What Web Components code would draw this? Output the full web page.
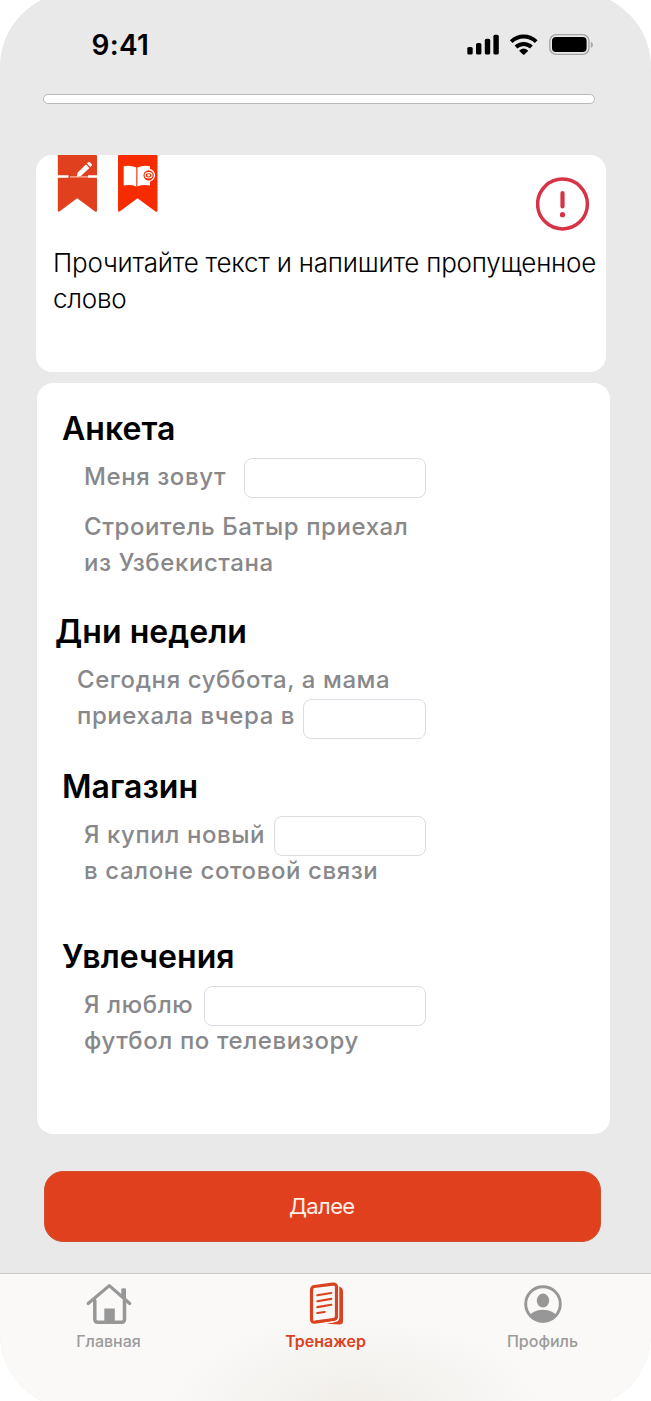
<!DOCTYPE html>
<html lang="ru">
  <head>
    <meta charset="utf-8" />
    <title>Тренажер</title>
    <style>
      body {
        margin: 0;
        background: #fff;
        overflow: hidden;
        font-family: Inter, "Noto Sans", sans-serif;
      }
    </style>
  </head>
  <body>
    <script type="text/javascript">
      class BaseElement extends HTMLElement {
        constructor() {
          super();
          this.attachShadow({ mode: "open" });
        }
        connectedCallback() {
          const template = document.createElement("template");
          template.innerHTML = this.html();
          this.shadowRoot.replaceChildren(template.content.cloneNode(true));
        }
      }

      class PhoneScreen extends BaseElement {
        html() {
          return `
          <style>
            :host {
              display: flex;
              flex-direction: column;
              box-sizing: border-box;
              width: 651px;
              height: 1417px;
              margin-top: -8px;
              padding-top: 8px;
              border-radius: 75px;
              overflow: hidden;
              background: #e9e9e9;
            }
          </style>
          <slot></slot>
          `;
        }
      }

      class StatusBar extends BaseElement {
        html() {
          return `
          <style>
            :host {
              display: flex;
              justify-content: space-between;
              align-items: center;
              height: 90px;
              box-sizing: border-box;
              padding: 0 57px 0 91.5px;
              flex: none;
            }
            .time {
              font-size: 28px;
              font-weight: 600;
              letter-spacing: 0.3px;
            }
          </style>
          <span class="time">9:41</span>
          <svg width="128" height="24" viewBox="466 33 128 24">
            <rect x="467.3" y="47" width="5.4" height="7.6" rx="1.6" />
            <rect x="476" y="43" width="5.4" height="11.6" rx="1.6" />
            <rect x="484.8" y="38.7" width="5.4" height="15.9" rx="1.6" />
            <rect x="493.4" y="34.7" width="5.4" height="19.9" rx="1.6" />
            <g fill="none" stroke="#000" stroke-width="3.9">
              <path d="M511.2 41.6a18 18 0 0 1 25 0" />
              <path d="M516 47a11.2 11.2 0 0 1 15.4 0" />
            </g>
            <path d="M519.6 50.2a6.4 6.4 0 0 1 8.2 0q.5.5 0 1l-3.4 3.2q-.7.6-1.4 0l-3.4-3.2q-.5-.5 0-1z" />
            <rect x="549.8" y="34.6" width="39.2" height="19.8" rx="6.4" fill="none" stroke="#a5a5a5" stroke-width="1.4" />
            <rect x="552" y="37" width="34.6" height="15" rx="4" />
            <path d="M590.8 41.7q2.2.9 2.2 3t-2.2 3.2z" fill="#a5a5a5" />
          </svg>
          `;
        }
      }

      class ProgressTrack extends BaseElement {
        html() {
          return `
          <style>
            :host {
              display: block;
              flex: none;
              box-sizing: border-box;
              height: 10px;
              margin: 4px 56px 0 43px;
              border: 1px solid #b9b9b9;
              border-radius: 5px;
              background: #fff;
            }
          </style>
          `;
        }
      }

      class TaskCard extends BaseElement {
        html() {
          return `
          <style>
            :host {
              display: block;
              flex: none;
              box-sizing: border-box;
              width: 570px;
              height: 217px;
              margin: 51px 0 0 36px;
              padding: 0 0 0 17px;
              border-radius: 16px;
              background: #fff;
            }
            .top {
              display: flex;
              justify-content: space-between;
              align-items: flex-start;
              height: 90px;
              padding-right: 16px;
            }
            .alert {
              margin-top: 22px;
            }
            p {
              margin: 0;
              font-size: 26px;
              line-height: 36px;
              letter-spacing: -0.23px;
              font-weight: 300;
              white-space: nowrap;
            }
          </style>
          <div class="top">
            <svg width="106" height="60" viewBox="53 155 106 60">
              <path fill="#e0401d" d="M58 155h38q1 0 1 1v54.500q0 2-2 1L77.200 198.300 59.800 211.200q-2 1.300-2-1V155z" />
              <path stroke="#fff" stroke-width="2.600" d="M57 176.500h11.500M88 176.500h9" />
              <path stroke="#f6b8a8" stroke-width="1.200" d="M70 176.800h18" />
              <path fill="#fff" d="M76.700 176.800l1-4.400 8.200-8 3.600 3.500-8.600 8.200z" />
              <path fill="#fff" d="M86.800 163.500l1.300-1.200q1-.8 2 .1l1.500 1.500q.9.900 0 1.900l-1.300 1.300z" />
              <path fill="#f62b00" d="M119 155h37.500q1 0 1 1v54.500q0 2-2 1L137.500 198.300 120 211.200q-2 1.300-2-1V156q0-1 1-1z" />
              <path fill="#fff" d="M123.700 166.300q6.800-1.300 12.600 1.300v18.800q-5.600-2.300-12.600-1z" />
              <path fill="#fff" d="M150 166.300q-6.800-1.300-12.600 1.300v18.800q5.600-2.300 12.600-1z" />
              <circle cx="148.600" cy="175.300" r="5.800" fill="#f62b00" stroke="#fff" stroke-width="1.300" />
              <ellipse cx="148.600" cy="175.300" rx="3.400" ry="2.700" fill="none" stroke="#fff" stroke-width="1.200" />
              <circle cx="148.600" cy="175.300" r="1.200" fill="#fff" />
            </svg>
            <svg class="alert" width="54" height="54" viewBox="0 0 54 54">
              <circle cx="26.500" cy="27" r="24.900" fill="none" stroke="#d63346" stroke-width="3.500" />
              <path stroke="#d63346" stroke-width="4.200" stroke-linecap="round" d="M26.500 16v13.500" />
              <circle cx="26.500" cy="37.700" r="2.600" fill="#d63346" />
            </svg>
          </div>
          <p><slot></slot></p>
          `;
        }
      }

      class QuizCard extends BaseElement {
        html() {
          return `
          <style>
            :host {
              display: block;
              flex: none;
              box-sizing: border-box;
              width: 573px;
              height: 751px;
              margin: 11px 0 0 37px;
              padding-top: 26px;
              border-radius: 16px;
              background: #fff;
            }
          </style>
          <slot></slot>
          `;
        }
      }

      class QuizSection extends BaseElement {
        html() {
          return `
          <style>
            :host {
              display: block;
              padding-left: 25px;
            }
            h2 {
              margin: 0 0 10px;
              font-size: 32px;
              line-height: 40px;
              font-weight: 600;
              letter-spacing: 0.05px;
            }
            .lines {
              padding-left: 22px;
            }
          </style>
          <h2>${this.getAttribute("heading")}</h2>
          <div class="lines"><slot></slot></div>
          `;
        }
      }

      class QuizLine extends BaseElement {
        html() {
          return `
          <style>
            :host {
              display: flex;
              align-items: flex-start;
              height: 36px;
              width: 342px;
              line-height: 36px;
              font-size: 24px;
              font-weight: 500;
              letter-spacing: 0.58px;
              color: #88888b;
              white-space: nowrap;
            }
          </style>
          <slot></slot>
          `;
        }
      }

      class WordField extends BaseElement {
        html() {
          return `
          <style>
            :host {
              flex: none;
              margin-left: auto;
            }
            input {
              display: block;
              box-sizing: border-box;
              width: ${this.getAttribute("width")}px;
              height: 40px;
              border: 1px solid #dcdce4;
              border-radius: 8px;
              background: #fff;
              outline: none;
            }
          </style>
          <input type="text" />
          `;
        }
      }

      class NextButton extends BaseElement {
        html() {
          return `
          <style>
            :host {
              display: block;
              flex: none;
              margin: 37px 0 0 43.5px;
            }
            button {
              display: block;
              width: 557.5px;
              height: 71px;
              padding: 0 1px 2px 0;
              border: 1px solid #d0512f;
              border-radius: 19px;
              background: #e0401d;
              color: #fff0ea;
              font: 400 22px Inter, "Noto Sans", sans-serif;
              letter-spacing: -0.6px;
            }
          </style>
          <button><slot></slot></button>
          `;
        }
      }

      class TabBar extends BaseElement {
        html() {
          return `
          <style>
            :host {
              display: flex;
              flex: 1;
              margin-top: 31px;
              border-top: 1px solid #cbc9cb;
              background: radial-gradient(ellipse 190px 95px at 355px 136px, #f0ede8, #faf9f8);
            }
          </style>
          <slot></slot>
          `;
        }
      }

      const icons = {
        home: `
          <g fill="none" stroke="#979797" stroke-linecap="round" stroke-linejoin="round">
            <path stroke-width="3.2" d="M3.200 21.500 24.300 3.600l20.400 17.900" />
            <path stroke-width="3.500" d="M9.800 18.500v18.700q0 3 3 3h23.700q3 0 3-3V18.500" />
            <path stroke-width="4.200" stroke-linecap="butt" d="M38.600 6.500v9" />
          </g>
          <path fill="#979797" d="M19.300 26.500h10.500V40H19.300zM36.500 7q2-1 4.500 0v11l-4.500-4z" />`,
        trainer: `
          <path fill="#d9431f" d="M36.500 4.300q4.500 1.500 4.500 4.700v30q0 3.500-3.500 3.500l-13-.8q9-1 12-4.200z" />
          <path fill="#faf9f8" stroke="#d9431f" stroke-width="3.200" stroke-linejoin="round" d="M12.300 4.500l18.500-2.300q3.700-.4 3.700 3v29q0 3-3.200 3.500l-18.500 2.500q-3.300.3-3.300-3V8q0-3 2.800-3.500z" />
          <path fill="none" stroke="#faf9f8" stroke-width="1.200" d="M36.700 4.500v31q0 3.200-3.500 4l-10 1.500" />
          <path stroke="#d9431f" stroke-width="2.100" stroke-linecap="round" d="M15.300 13.300l14-2.300M15.300 19.200l14-2.300M15.300 25.100l14-2.300M15.300 31l7.500-1" />`,
        profile: `
          <clipPath id="c"><circle cx="24" cy="22" r="18.500" /></clipPath>
          <circle cx="24" cy="22" r="17.300" fill="none" stroke="#979797" stroke-width="2.900" />
          <ellipse cx="24" cy="18.600" rx="6.200" ry="7" fill="#979797" />
          <path clip-path="url(#c)" fill="#979797" d="M9 35.300q4.500-7.600 15-7.600t15 7.600l-5 7H14z" />`,
      };

      class TabItem extends BaseElement {
        html() {
          return `
          <style>
            :host {
              display: flex;
              flex: 1;
              flex-direction: column;
              align-items: center;
              padding-top: 8px;
              font-size: 16px;
              font-weight: 500;
              letter-spacing: 0;
              line-height: 20px;
              color: #9b9b9b;
            }
            :host([active]) {
              color: #d9431f;
              font-weight: 600;
            }
            svg {
              margin-bottom: 5px;
            }
          </style>
          <svg width="48" height="44" viewBox="0 0 48 44">${icons[this.getAttribute("icon")]}</svg>
          <span><slot></slot></span>
          `;
        }
      }

      window.customElements.define("phone-screen", PhoneScreen);
      window.customElements.define("status-bar", StatusBar);
      window.customElements.define("progress-track", ProgressTrack);
      window.customElements.define("task-card", TaskCard);
      window.customElements.define("quiz-card", QuizCard);
      window.customElements.define("quiz-section", QuizSection);
      window.customElements.define("quiz-line", QuizLine);
      window.customElements.define("word-field", WordField);
      window.customElements.define("next-button", NextButton);
      window.customElements.define("tab-bar", TabBar);
      window.customElements.define("tab-item", TabItem);
    </script>
    <phone-screen>
      <status-bar></status-bar>
      <progress-track></progress-track>
      <task-card>Прочитайте текст и напишите пропущенное<br />слово</task-card>
      <quiz-card>
        <quiz-section heading="Анкета">
          <quiz-line>Меня зовут<word-field width="182" style="margin-top: -1px"></word-field></quiz-line>
          <quiz-line style="margin-top: 14px">Строитель Батыр приехал</quiz-line>
          <quiz-line>из Узбекистана</quiz-line>
        </quiz-section>
        <quiz-section heading="Дни недели" style="margin: 31px 0 0 -7px">
          <quiz-line>Сегодня суббота, а мама</quiz-line>
          <quiz-line style="width: 349px">приехала вчера в<word-field width="123" style="margin-top: 1px"></word-field></quiz-line>
        </quiz-section>
        <quiz-section heading="Магазин" style="margin-top: 33px">
          <quiz-line>Я купил новый<word-field width="152" style="margin-top: -1px"></word-field></quiz-line>
          <quiz-line>в салоне сотовой связи</quiz-line>
        </quiz-section>
        <quiz-section heading="Увлечения" style="margin-top: 48px">
          <quiz-line>Я люблю<word-field width="222" style="margin-top: -1px"></word-field></quiz-line>
          <quiz-line>футбол по телевизору</quiz-line>
        </quiz-section>
      </quiz-card>
      <next-button>Далее</next-button>
      <tab-bar>
        <tab-item icon="home">Главная</tab-item>
        <tab-item icon="trainer" active>Тренажер</tab-item>
        <tab-item icon="profile">Профиль</tab-item>
      </tab-bar>
    </phone-screen>
  </body>
</html>
